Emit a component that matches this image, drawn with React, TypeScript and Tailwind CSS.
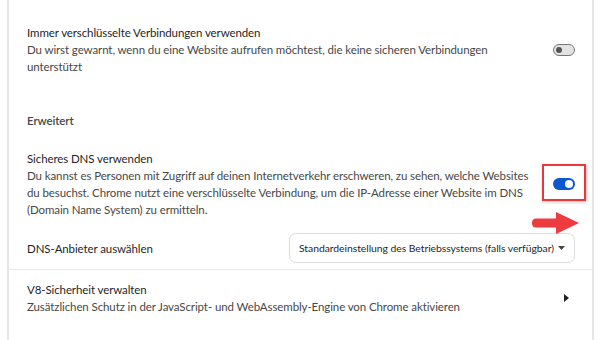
import React from 'react';

function Toggle({ on }: { on: boolean }) {
  if (on) {
    return (
      <div className="w-[22px] h-[12px] rounded-full bg-[#0b57d0] flex items-center justify-end pr-[2px] shrink-0">
        <div className="w-[8px] h-[8px] rounded-full bg-white" />
      </div>
    );
  }
  return (
    <div className="w-[22px] h-[12px] rounded-full bg-[#e3e3e3] border border-[#747775] flex items-center pl-[2px] shrink-0">
      <div className="w-[6px] h-[6px] rounded-full bg-[#555]" />
    </div>
  );
}

export default function App() {
  return (
    <div
      className="relative w-[600px] h-[340px] bg-white overflow-hidden text-[11.5px] tracking-[-0.1px] leading-[17px] text-[#474747]"
      style={{ fontFamily: 'Lato, "Open Sans", sans-serif' }}
    >
      <div className="ml-[7px] w-[587px] h-full border-x-2 border-[#e6e6e6] flex flex-col">
        {/* Immer verschlüsselte Verbindungen */}
        <div className="flex items-center pl-[18px] pr-[17px] pt-[24px]">
          <div className="flex-1 min-w-0 whitespace-nowrap">
            <div className="text-[#1f1f1f]">Immer verschlüsselte Verbindungen verwenden</div>
            <div>Du wirst gewarnt, wenn du eine Website aufrufen möchtest, die keine sicheren Verbindungen</div>
            <div>unterstützt</div>
          </div>
          <Toggle on={false} />
        </div>

        <div className="pl-[18px] mt-[37px] font-semibold text-[#474747]">Erweitert</div>

        {/* Sicheres DNS */}
        <div className="flex items-center pl-[18px] pr-[17px] mt-[21px]">
          <div className="flex-1 min-w-0 whitespace-nowrap">
            <div className="text-[#1f1f1f]">Sicheres DNS verwenden</div>
            <div>Du kannst es Personen mit Zugriff auf deinen Internetverkehr erschweren, zu sehen, welche Websites</div>
            <div>du besuchst. Chrome nutzt eine verschlüsselte Verbindung, um die IP-Adresse einer Website im DNS</div>
            <div>(Domain Name System) zu ermitteln.</div>
          </div>
          <Toggle on={true} />
        </div>

        {/* DNS-Anbieter */}
        <div className="flex items-center justify-between pl-[18px] pr-[17px] mt-[15px]">
          <div className="text-[#1f1f1f]">DNS-Anbieter auswählen</div>
          <div className="w-[286px] h-[30px] rounded-[7px] border border-[#dadce0] flex items-center pl-[9px] pr-[6px] gap-[4px] text-[10.4px] tracking-[-0.05px] text-[#1f1f1f]">
            <span className="whitespace-nowrap">Standardeinstellung des Betriebssystems (falls verfügbar)</span>
            <svg className="shrink-0" width="7" height="4" viewBox="0 0 7 4">
              <path d="M0 0 L7 0 L3.5 4 Z" fill="#444" />
            </svg>
          </div>
        </div>

        <div className="mt-[6px] border-t border-[#e8e8e8]" />

        {/* V8-Sicherheit */}
        <div className="flex items-center pl-[18px] pr-[23px] pt-[11px]">
          <div className="flex-1 min-w-0 whitespace-nowrap">
            <div className="text-[#1f1f1f]">V8-Sicherheit verwalten</div>
            <div>Zusätzlichen Schutz in der JavaScript- und WebAssembly-Engine von Chrome aktivieren</div>
          </div>
          <svg className="shrink-0" width="5" height="8" viewBox="0 0 5 8">
            <path d="M0 0 L5 4 L0 8 Z" fill="#1f1f1f" />
          </svg>
        </div>
      </div>

      {/* red highlight box */}
      <div className="absolute left-[542px] top-[164px] w-[44px] h-[37px] border-2 border-[#e8383b] shadow-[1px_1px_3px_rgba(0,0,0,0.25)]" />

      {/* red arrow */}
      <svg className="absolute left-[532px] top-[211px]" width="48" height="24" viewBox="0 0 48 24">
        <path d="M4 7.5 L24 7.5 L24 1 L47 12 L24 23 L24 16.5 L4 16.5 Q0 16.5 0 12 Q0 7.5 4 7.5 Z" fill="#ee3b3f" />
      </svg>
    </div>
  );
}
